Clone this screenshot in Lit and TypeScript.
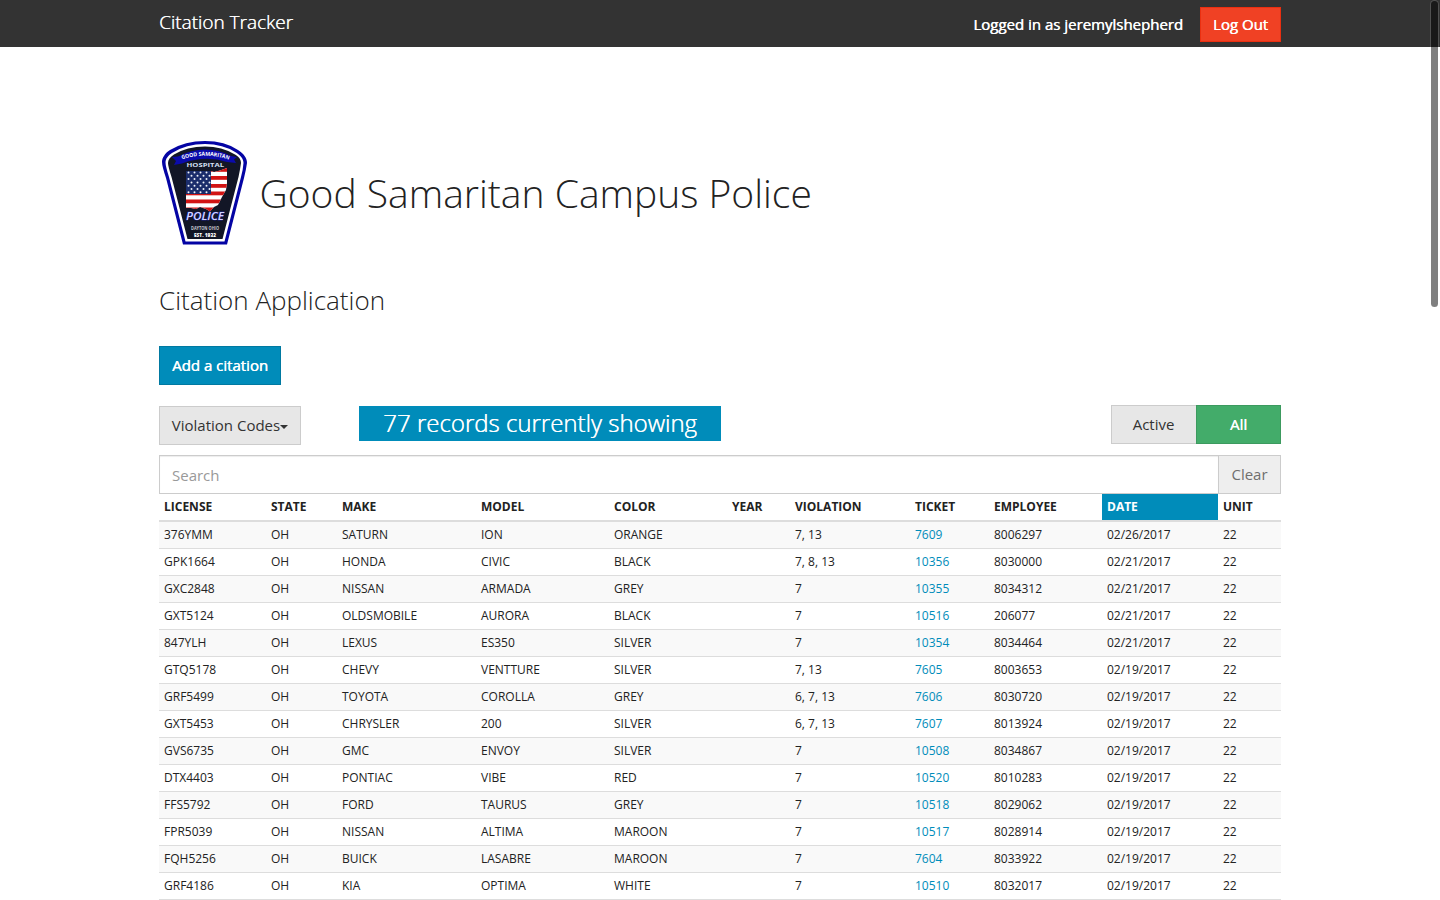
import { LitElement, html, css, svg } from "lit";
import { customElement, property } from "lit/decorators.js";

const COLUMNS = ["LICENSE", "STATE", "MAKE", "MODEL", "COLOR", "YEAR", "VIOLATION", "TICKET", "EMPLOYEE", "DATE", "UNIT"];

const ROWS: string[][] = [
  ["376YMM", "OH", "SATURN", "ION", "ORANGE", "", "7, 13", "7609", "8006297", "02/26/2017", "22"],
  ["GPK1664", "OH", "HONDA", "CIVIC", "BLACK", "", "7, 8, 13", "10356", "8030000", "02/21/2017", "22"],
  ["GXC2848", "OH", "NISSAN", "ARMADA", "GREY", "", "7", "10355", "8034312", "02/21/2017", "22"],
  ["GXT5124", "OH", "OLDSMOBILE", "AURORA", "BLACK", "", "7", "10516", "206077", "02/21/2017", "22"],
  ["847YLH", "OH", "LEXUS", "ES350", "SILVER", "", "7", "10354", "8034464", "02/21/2017", "22"],
  ["GTQ5178", "OH", "CHEVY", "VENTTURE", "SILVER", "", "7, 13", "7605", "8003653", "02/19/2017", "22"],
  ["GRF5499", "OH", "TOYOTA", "COROLLA", "GREY", "", "6, 7, 13", "7606", "8030720", "02/19/2017", "22"],
  ["GXT5453", "OH", "CHRYSLER", "200", "SILVER", "", "6, 7, 13", "7607", "8013924", "02/19/2017", "22"],
  ["GVS6735", "OH", "GMC", "ENVOY", "SILVER", "", "7", "10508", "8034867", "02/19/2017", "22"],
  ["DTX4403", "OH", "PONTIAC", "VIBE", "RED", "", "7", "10520", "8010283", "02/19/2017", "22"],
  ["FFS5792", "OH", "FORD", "TAURUS", "GREY", "", "7", "10518", "8029062", "02/19/2017", "22"],
  ["FPR5039", "OH", "NISSAN", "ALTIMA", "MAROON", "", "7", "10517", "8028914", "02/19/2017", "22"],
  ["FQH5256", "OH", "BUICK", "LASABRE", "MAROON", "", "7", "7604", "8033922", "02/19/2017", "22"],
  ["GRF4186", "OH", "KIA", "OPTIMA", "WHITE", "", "7", "10510", "8032017", "02/19/2017", "22"],
];

@customElement("police-badge")
export class PoliceBadge extends LitElement {
  static styles = css`
    :host { display: block; width: 90px; height: 107px; }
    .badge { display: block; }
    .word { font-family: "Open Sans", sans-serif; fill: #fff; }
    .motto { font-weight: 700; font-size: 5.4px; }
    .hospital { font-weight: 700; font-size: 6px; fill: #d5e0f4; }
    .police { font-weight: 600; font-style: italic; font-size: 10.5px; fill: #d3d7ff; stroke: #2a2ad8; stroke-width: 0.5px; paint-order: stroke; }
    .city { font-weight: 700; font-size: 5px; fill: #c8cad0; }
    .est { font-weight: 800; font-size: 5.2px; }
  `;

  render() {
    const stars = [0, 1, 2, 3, 4, 5, 6].flatMap((r) =>
      [0, 1, 2, 3].map((c) => svg`<circle cx=${28.5 + c * 6 + (r % 2) * 3} cy=${33.5 + r * 3.3} r="1" fill="#eef2fa"></circle>`)
    );
    return html`
      <svg class="badge" width="90" height="107" viewBox="0 0 90 107">
        <defs>
          <path id="arc" d="M20 21 Q45 12.4 70 21"></path>
          <clipPath id="ohio">
            <path d="M26 32 H51 L54 33 L60 31.5 L67 29 V44 L66 51 L62 58 L58 66 L54 68 L50 72.5 L46 70 L40 68 L36 70 L31 69 L26 69 Z"></path>
          </clipPath>
        </defs>
        <path d="M2 23 C2 19 5 14 10 11 Q25 2 45 2 Q65 2 78 11 C84 15 87 19 87 24 Q86 31 84 39 L67 105.5 H23 L6 39 Q2 27 2 23 Z" fill="#0404a4"></path>
        <path d="M5.5 23.5 C5.5 20 8 16.5 12 14 Q26 5 45 5 Q63 5 76 13.5 C81 17 83.5 20 83.5 24 Q83 31 81 38 L64.5 102.5 H25.5 L9 38 Q5.5 27 5.5 23.5 Z" fill="#fff"></path>
        <path d="M8 24 C8 21 10 18 14 15.5 Q27 7.5 45 7.5 Q62 7.5 75 15.5 C79.5 18 81 21 81 24 Q80 31 78.5 38 L62.5 100 H27.5 L11.5 38 Q8 27 8 24 Z" fill="#121626"></path>
        <path d="M12 18 L18 17.5 Q45 4 71 17 L77 18 L74 20.5 L76 24 L67 23 Q45 16 22 24.5 L14 26 L16 22 Z" fill="#0b0bab"></path>
        <text class="word motto" textLength="48" lengthAdjust="spacingAndGlyphs"><textPath href="#arc" startOffset="2">GOOD SAMARITAN</textPath></text>
        <text class="word hospital" x="26.5" y="27.5" textLength="37.5" lengthAdjust="spacingAndGlyphs">HOSPITAL</text>
        <g clip-path="url(#ohio)">
          <rect x="25" y="27" width="44" height="47" fill="#fff"></rect>
          ${[29, 37, 45, 52.5, 60.5, 68.5].map((y) => svg`<rect x="25" y=${y} width="44" height="3.8" fill="#d21414"></rect>`)}
          <rect x="25" y="29" width="26" height="26" fill="#1b2d6b"></rect>
          ${stars}
        </g>
        <text class="word police" x="26" y="81" textLength="38" lengthAdjust="spacingAndGlyphs">POLICE</text>
        <text class="word city" x="31" y="91" textLength="28" lengthAdjust="spacingAndGlyphs">DAYTON OHIO</text>
        <text class="word est" x="34" y="98" textLength="22" lengthAdjust="spacingAndGlyphs">EST. 1932</text>
      </svg>
    `;
  }
}

@customElement("citation-table")
export class CitationTable extends LitElement {
  @property({ attribute: false }) rows: string[][] = [];

  static styles = css`
    :host { display: block; font-size: 12px; line-height: 17px; }
    .row { display: grid; grid-template-columns: 107px 71px 139px 133px 118px 63px 120px 79px 113px 116px 63px; height: 27px; box-sizing: border-box; border-bottom: 1px solid #ddd; }
    .row:nth-child(even) { background: #f9f9f9; }
    .head { height: 28px; border-bottom-width: 2px; font-weight: 700; }
    .cell { padding: 4px 5px 0; white-space: nowrap; }
    .sorted { background: #008cba; color: #fff; }
    .ticket { color: #008cba; text-decoration: none; }
  `;

  render() {
    return html`
      <div class="row head">${COLUMNS.map((c) => html`<div class="cell ${c === "DATE" ? "sorted" : ""}">${c}</div>`)}</div>
      ${this.rows.map(
        (r) => html`<div class="row">
          ${r.map((v, i) => html`<div class="cell">${i === 7 ? html`<a class="ticket" href="#">${v}</a>` : v}</div>`)}
        </div>`
      )}
    `;
  }
}

@customElement("app-root")
export class AppRoot extends LitElement {
  static styles = css`
    :host { display: block; position: relative; height: 900px; overflow: hidden; background: #fff; color: #222; font-family: "Open Sans", sans-serif; font-size: 15px; line-height: 21px; }
    * { box-sizing: border-box; }
    .wrap { width: 1122px; margin-left: 159px; }
    .nav { height: 47px; background: #333; color: #fff; }
    .bar { display: flex; height: 47px; align-items: flex-start; }
    .brand { font-size: 19px; font-weight: 300; padding-top: 12px; margin-right: auto; text-shadow: 0.4px 0 0 #fff; }
    .user { padding-top: 14px; margin-right: 17px; text-shadow: 0.4px 0 0 #fff; }
    .btn { display: flex; align-items: center; justify-content: center; height: 39px; border: 1px solid #ccc; background: #e7e7e7; color: #333; white-space: nowrap; }
    .out { width: 81px; height: 35px; margin-top: 7px; background: #f04124; border-color: #ea2f10; color: #fff; text-shadow: 0.4px 0 0 #fff; }
    .title { display: flex; align-items: flex-start; margin-top: 92px; padding-left: 1px; }
    .h1 { margin: 26px 0 0 9.5px; font-size: 39px; line-height: 55px; font-weight: 300; white-space: nowrap; }
    .h3 { margin: 36px 0 0; font-size: 26px; line-height: 36px; font-weight: 300; }
    .add { width: 122px; margin-top: 28px; background: #008cba; border-color: #0079a1; color: #fff; text-shadow: 0.4px 0 0 #fff; }
    .tools { display: flex; align-items: flex-start; margin-top: 20px; height: 50px; }
    .codes { width: 142px; margin-top: 1px; }
    .caret { border: 4px solid transparent; border-top-color: #333; border-bottom: 0; margin-top: 2px; }
    .count { width: 362px; height: 35px; margin: 1px auto 0 58px; background: #008cba; color: #fff; font-size: 24px; line-height: 34px; font-weight: 300; text-align: center; text-shadow: 0.4px 0 0 #fff; white-space: nowrap; }
    .active { width: 85px; border-right: 0; padding-right: 1px; }
    .all { width: 85px; background: #43ac6a; border-color: #3c9a5f; color: #fff; text-shadow: 0.4px 0 0 #fff; }
    .search { display: flex; height: 39px; border: 1px solid #ccc; }
    .field { flex: 1; min-width: 0; border: 0; padding: 2px 12px 0; font: inherit; outline: 0; box-shadow: inset 0 1px 1px rgba(0, 0, 0, 0.075); }
    .field::placeholder { color: #999; opacity: 1; }
    .clear { width: 62px; border-left: 1px solid #ccc; background: #eee; color: #6f6f6f; display: flex; align-items: center; justify-content: center; }
    .thumb { position: absolute; top: 1px; right: 2px; width: 7px; height: 306px; border-radius: 4px; background: rgba(0, 0, 0, 0.5); box-shadow: 0 0 0 1px rgba(255, 255, 255, 0.15); }
  `;

  render() {
    return html`
      <nav class="nav">
        <div class="wrap bar">
          <span class="brand">Citation Tracker</span>
          <span class="user">Logged in as jeremylshepherd</span>
          <a class="btn out">Log Out</a>
        </div>
      </nav>
      <main class="wrap">
        <header class="title">
          <police-badge></police-badge>
          <h1 class="h1">Good Samaritan Campus Police</h1>
        </header>
        <h3 class="h3">Citation Application</h3>
        <a class="btn add">Add a citation</a>
        <div class="tools">
          <a class="btn codes">Violation Codes<span class="caret"></span></a>
          <div class="count">77 records currently showing</div>
          <a class="btn active">Active</a>
          <a class="btn all">All</a>
        </div>
        <div class="search">
          <input class="field" placeholder="Search" />
          <span class="clear">Clear</span>
        </div>
        <citation-table .rows=${ROWS}></citation-table>
      </main>
      <div class="thumb"></div>
    `;
  }
}
